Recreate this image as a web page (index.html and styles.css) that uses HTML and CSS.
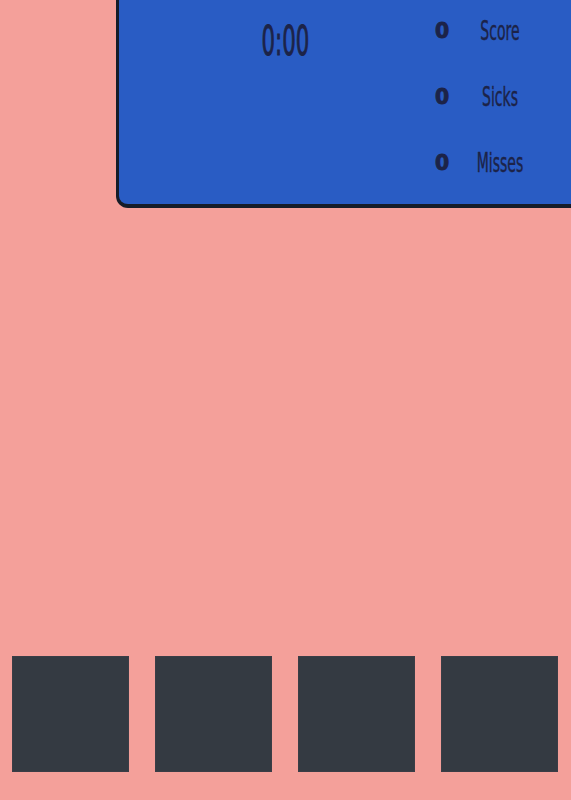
FILE: index.html
```html
<!DOCTYPE html>
<html lang="en">
<head>
<meta charset="utf-8">
<title>Game</title>
<link rel="stylesheet" href="styles.css">
</head>
<body>
<div class="top">
  <div class="panel">
    <div class="timer-col"><span class="timer">0:00</span></div>
    <div class="stats">
      <div class="stat"><span class="num">0</span><span class="label">Score</span></div>
      <div class="stat"><span class="num">0</span><span class="label">Sicks</span></div>
      <div class="stat"><span class="num">0</span><span class="label">Misses</span></div>
    </div>
  </div>
</div>
<div class="pads">
  <div class="pad"></div>
  <div class="pad"></div>
  <div class="pad"></div>
  <div class="pad"></div>
</div>
</body>
</html>
```
FILE: styles.css
```css
html, body {
  margin: 0;
  padding: 0;
}
body {
  background: #f4a09a;
  height: 800px;
  overflow: hidden;
  display: flex;
  flex-direction: column;
  justify-content: space-between;
  font-family: "DejaVu Sans Condensed", "Liberation Sans", sans-serif;
  color: #1c2348;
}
.top {
  padding-left: 116px;
}
.panel {
  box-sizing: border-box;
  height: 208px;
  background: #295cc4;
  border-left: 3px solid #161c28;
  border-bottom: 4px solid #161c28;
  border-bottom-left-radius: 12px;
  display: flex;
}
.timer-col {
  width: 288px;
  padding-left: 22px;
  text-align: center;
  padding-top: 29px;
}
.timer {
  display: inline-block;
  font-size: 32px;
  line-height: 24px;
  -webkit-text-stroke: 0.7px #1c2348;
  transform: scale(0.74, 1.28);
}
.stats {
  display: grid;
  grid-template-rows: repeat(3, 66px);
  margin-top: -2px;
}
.stat {
  display: grid;
  grid-template-columns: 26px 70px;
  column-gap: 10px;
  align-items: center;
}
.num {
  display: inline-block;
  font-family: "DejaVu Sans", sans-serif;
  font-weight: bold;
  font-size: 24px;
  line-height: 24px;
  text-align: center;
  margin-top: -1px;
  -webkit-text-stroke: 1px #1c2348;
  transform: scale(0.85, 0.9);
}
.label {
  display: inline-block;
  text-align: center;
  font-size: 20px;
  -webkit-text-stroke: 0.3px #1c2348;
  transform: scale(0.78, 1.3);
}
.pads {
  display: grid;
  grid-template-columns: repeat(4, 1fr);
  column-gap: 26px;
  padding: 0 13px 28px 12px;
}
.pad {
  height: 116px;
  background: #343a42;
  border: 1px solid #3a3d46;
  box-sizing: border-box;
}
```
